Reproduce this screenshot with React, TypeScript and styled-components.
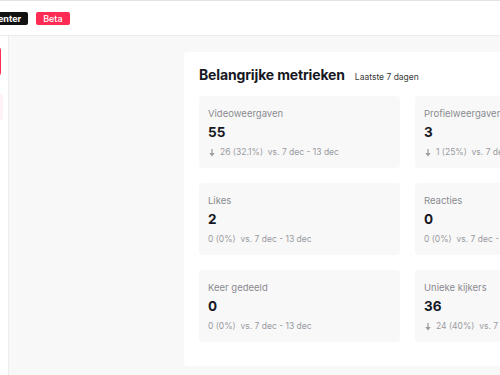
import React from 'react';
import styled, { createGlobalStyle } from 'styled-components';

const GlobalStyle = createGlobalStyle`
  html, body {
    margin: 0;
    padding: 0;
    background: #f8f8f8;
    font-family: Inter, "Noto Sans", sans-serif;
    overflow: hidden;
  }
`;

const Page = styled.div`
  width: 500px;
  height: 375px;
  display: flex;
  flex-direction: column;
  overflow: hidden;
`;

const Header = styled.header`
  height: 36px;
  flex-shrink: 0;
  display: flex;
  align-items: center;
  gap: 8px;
  background: #fff;
  border-top: 1px solid #e3e3e3;
  border-bottom: 1px solid #ebebeb;
  box-sizing: border-box;
  overflow: hidden;
`;

const Badge = styled.span<{ $tone: 'dark' | 'red' }>`
  display: inline-flex;
  align-items: center;
  justify-content: center;
  height: 13px;
  padding: 0 7px;
  border-radius: 2px;
  font-size: 9px;
  font-weight: ${(p) => (p.$tone === 'dark' ? 700 : 500)};
  color: #fff;
  white-space: nowrap;
  background: ${(p) => (p.$tone === 'dark' ? '#121212' : '#fe2c55')};
  flex-shrink: 0;
`;

const Logo = styled(Badge)`
  margin-left: -50px;
  padding: 0 7px 0 6px;
`;

const Body = styled.div`
  flex: 1;
  display: flex;
  min-height: 0;
`;

const Sidebar = styled.nav`
  width: 8px;
  flex-shrink: 0;
  background: #fff;
  border-right: 1px solid #ececec;
  display: flex;
  flex-direction: column;
  align-items: flex-end;
  padding-top: 11px;
  gap: 18px;
  overflow: hidden;
`;

const UploadButton = styled.div`
  width: 180px;
  height: 29px;
  flex-shrink: 0;
  margin-right: 7px;
  border: 1px solid #fe2c55;
  border-radius: 3px;
  box-sizing: border-box;
`;

const NavItem = styled.div<{ $active?: boolean }>`
  width: 180px;
  height: 26px;
  flex-shrink: 0;
  margin-right: 5px;
  border-radius: 3px;
  background: ${(p) => (p.$active ? '#fff1f4' : 'transparent')};
`;

const Main = styled.main`
  flex: 1;
  padding: 16px 0 0 175px;
  overflow: hidden;
`;

const Card = styled.section`
  width: 447px;
  height: 314px;
  box-sizing: border-box;
  background: #fff;
  border-radius: 4px;
  padding: 13px 15px 0;
`;

const CardHead = styled.div`
  display: flex;
  align-items: baseline;
  gap: 10px;
  height: 31px;
  padding-top: 1px;
  box-sizing: border-box;
`;

const Title = styled.h2`
  margin: 0;
  font-size: 14px;
  font-weight: 700;
  color: #161823;
  letter-spacing: -0.15px;
`;

const Period = styled.span`
  font-size: 8.5px;
  color: #3a3a3a;
`;

const Grid = styled.div`
  display: grid;
  grid-template-columns: 201px 201px;
  grid-auto-rows: 72px;
  gap: 15px 15px;
`;

const Tile = styled.div`
  background: #f8f8f8;
  border-radius: 4px;
  padding: 11px 9px 0;
  box-sizing: border-box;
  overflow: hidden;
`;

const Label = styled.div`
  font-size: 9.5px;
  color: #8a8b91;
  line-height: 13px;
  white-space: nowrap;
`;

const Value = styled.div`
  margin-top: 4px;
  font-size: 13.5px;
  font-weight: 700;
  color: #161823;
  line-height: 17px;
`;

const Delta = styled.div`
  margin-top: 6px;
  display: flex;
  align-items: center;
  gap: 5px;
  font-size: 8.5px;
  line-height: 11px;
  color: #999aa0;
  white-space: nowrap;
`;

const Arrow = () => (
  <svg width="6" height="8" viewBox="0 0 6 8" aria-hidden style={{ marginLeft: 1 }}>
    <rect x="2.4" y="0" width="1.2" height="4.5" fill="#999aa0" />
    <path d="M0.4 4 L5.6 4 L3 7.6 Z" fill="#999aa0" />
  </svg>
);

type Metric = {
  label: string;
  value: string;
  change: string;
  down?: boolean;
};

const metrics: Metric[] = [
  { label: 'Videoweergaven', value: '55', change: '26 (32.1%)', down: true },
  { label: 'Profielweergaven', value: '3', change: '1 (25%)', down: true },
  { label: 'Likes', value: '2', change: '0 (0%)' },
  { label: 'Reacties', value: '0', change: '0 (0%)' },
  { label: 'Keer gedeeld', value: '0', change: '0 (0%)' },
  { label: 'Unieke kijkers', value: '36', change: '24 (40%)', down: true },
];

export default function App() {
  return (
    <Page>
      <GlobalStyle />
      <Header>
        <Logo $tone="dark">Creator Center</Logo>
        <Badge $tone="red">Beta</Badge>
      </Header>
      <Body>
        <Sidebar>
          <UploadButton />
          <NavItem $active />
        </Sidebar>
        <Main>
          <Card>
            <CardHead>
              <Title>Belangrijke metrieken</Title>
              <Period>Laatste 7 dagen</Period>
            </CardHead>
            <Grid>
              {metrics.map((m) => (
                <Tile key={m.label}>
                  <Label>{m.label}</Label>
                  <Value>{m.value}</Value>
                  <Delta>
                    {m.down && <Arrow />}
                    <span>{m.change} &nbsp;vs. 7 dec - 13 dec</span>
                  </Delta>
                </Tile>
              ))}
            </Grid>
          </Card>
        </Main>
      </Body>
    </Page>
  );
}
